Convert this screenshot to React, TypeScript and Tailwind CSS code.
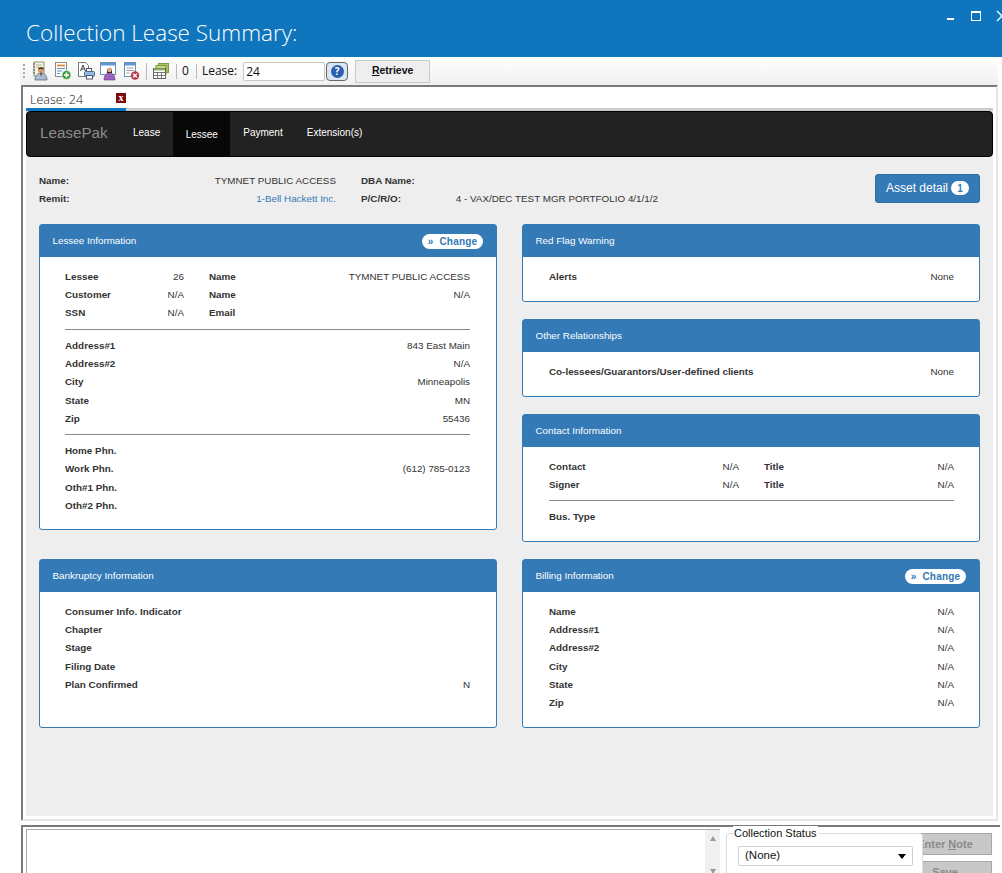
const font = "font-['Liberation_Sans',Arial,sans-serif]";

type Row = { label: string; value?: string };

function Panel({ title, change, className, children }: { title: string; change?: boolean; className: string; children: React.ReactNode }) {
  return (
    <section className={`rounded-[3px] border border-[#337ab7] bg-white ${className}`}>
      <div className="flex h-[32px] items-center justify-between bg-[#337ab7] pl-[12.500px] pr-[13px] text-[9.85px] text-white">
        <span>{title}</span>
        {change ? (
          <span className="mt-[1px] flex h-[15px] w-[61px] items-center justify-center gap-[6px] rounded-full bg-white text-[10px] font-bold tracking-[0.2px] text-[#337ab7]">
            <span>»</span>
            <span>Change</span>
          </span>
        ) : null}
      </div>
      {children}
    </section>
  );
}

function Rows({ rows }: { rows: Row[] }) {
  return (
    <div className="flex flex-col">
      {rows.map((r) => (
        <div key={r.label} className="flex h-[18.3px] items-center justify-between text-[9.85px] text-[#333]">
          <span className="font-bold">{r.label}</span>
          <span>{r.value}</span>
        </div>
      ))}
    </div>
  );
}

function FourCol({ rows, valueW }: { rows: string[][]; valueW: string }) {
  return (
    <div className="flex flex-col">
      {rows.map((r) => (
        <div key={r[0] + r[2]} className="flex h-[18.3px] items-center text-[9.85px] text-[#333]">
          <span className="w-[70px] font-bold">{r[0]}</span>
          <span className={`text-right ${valueW}`}>{r[1]}</span>
          <span className="ml-[25px] font-bold">{r[2]}</span>
          <span className="ml-auto">{r[3]}</span>
        </div>
      ))}
    </div>
  );
}

function ToolbarIcons() {
  return (
    <div className="flex items-center">
      <div className="flex items-center gap-[5px]">
        <svg width="18" height="20" viewBox="0 0 18 20">
          <rect x="3" y="1" width="10" height="14" fill="#f7f5e8" stroke="#8c9470" />
          <path d="M2 3h2M2 6h2M2 9h2M2 12h2" stroke="#555" />
          <path d="M5 4h6M5 6h3" stroke="#b5b08a" />
          <circle cx="10" cy="9" r="3" fill="#d59a6c" />
          <path d="M7 8.500c0-3 6-3 6 0-2-1-4-1-6 0z" fill="#3a2a20" />
          <path d="M4 19c0-5 3-7 6-7s6 2 6 7z" fill="#a9bcd0" stroke="#56606b" strokeWidth=".7" />
          <path d="M9 12h2l-1 4z" fill="#8a3030" />
        </svg>
        <svg width="18" height="20" viewBox="0 0 18 20">
          <rect x="1.500" y="1.500" width="11" height="14" fill="#fff" stroke="#8a8a8a" />
          <path d="M3 4.500h8" stroke="#e8863a" strokeWidth="1.800" />
          <path d="M3 7.500h8M3 10h5M3 12.500h3" stroke="#5b8fd0" />
          <circle cx="12.500" cy="14" r="4.500" fill="#3c9a3c" stroke="#fff" strokeWidth=".6" />
          <path d="M10 14h5M12.500 11.500v5" stroke="#fff" strokeWidth="1.600" />
        </svg>
        <svg width="18" height="20" viewBox="0 0 18 20">
          <path d="M1.500 1.500h7l3 3v11h-10z" fill="#fff" stroke="#777" />
          <path d="M3.500 10l2.500-6 2.500 6M4.500 8h3" fill="none" stroke="#444" />
          <rect x="9.500" y="7.500" width="5" height="3" fill="#fff" stroke="#557" />
          <rect x="7.500" y="10.500" width="10" height="5" rx="1" fill="#8fbde2" stroke="#4d6a88" />
          <rect x="9.500" y="14.500" width="6" height="3.500" fill="#fff" stroke="#557" />
        </svg>
        <svg width="18" height="20" viewBox="0 0 18 20">
          <rect x=".5" y="1.500" width="15" height="12" fill="#fff" stroke="#6a8fb5" />
          <rect x="1" y="2" width="14" height="2.500" fill="#5f9ad6" />
          <path d="M7 12c-1-7 6-7 5 0z" fill="#2e2018" />
          <circle cx="9.500" cy="9" r="2.200" fill="#e4b08c" />
          <path d="M4 19c0-5 2.500-7 5.500-7s5.500 2 5.500 7z" fill="#9b5fc0" stroke="#5a3a70" strokeWidth=".6" />
        </svg>
        <svg width="18" height="20" viewBox="0 0 18 20">
          <rect x="1.500" y="1.500" width="11" height="14" fill="#fff" stroke="#6a8fb5" />
          <rect x="2" y="2" width="10" height="2.500" fill="#5f9ad6" />
          <path d="M3.500 7h7M3.500 9.500h7M3.500 12h3" stroke="#9a9a9a" />
          <circle cx="12" cy="14.500" r="4.200" fill="#b5384a" />
          <path d="M10.200 12.700l3.600 3.600M13.800 12.700l-3.600 3.600" stroke="#fff" strokeWidth="1.500" />
        </svg>
      </div>
      <span className="ml-[5px] h-[17px] w-px bg-[#bbb]" />
      <svg className="ml-[5px]" width="18" height="18" viewBox="0 0 18 18">
        <rect x="6.500" y="1.500" width="10" height="9" fill="#a8c65c" stroke="#7d9a40" />
        <rect x="4" y="3.500" width="10" height="9" fill="#c4d88a" stroke="#7d9a40" />
        <rect x="1.500" y="6.500" width="12" height="10" fill="#fff" stroke="#666" />
        <path d="M2 7.500h11" stroke="#9cb060" strokeWidth="2" />
        <path d="M1.500 10.500h12M1.500 13.500h12M5.500 10v6M9.500 10v6" stroke="#777" />
      </svg>
    </div>
  );
}

export default function App() {
  return (
    <div className={`h-[873px] w-[1002px] overflow-hidden bg-white ${font}`}>
      <header className="relative h-[57px] bg-[#0f75bc]">
        <h1 className="pl-[26px] pt-[18px] font-['Open_Sans',sans-serif] text-[22.500px] font-light leading-[30px] text-white">
          Collection Lease Summary:
        </h1>
        <div className="absolute left-[947px] top-[18px] h-[2px] w-[7px] bg-white" />
        <div className="absolute left-[971px] top-[11px] h-[10px] w-[10px] border border-t-2 border-white" />
        <svg className="absolute left-[996px] top-[10px]" width="12" height="12" viewBox="0 0 12 12">
          <path d="M1 1l10 10M11 1L1 11" stroke="#fff" strokeWidth="1.300" />
        </svg>
      </header>

      <div className="ml-[20px] mr-[4px] flex h-[28px] items-center bg-gradient-to-b from-white to-[#f0f0f0] pl-[3px] font-['Open_Sans',sans-serif] text-[12px] text-[#111]">
        <div className="mr-[6px] h-[14px] w-[2px] border-l-2 border-dotted border-[#aaa]" />
        <ToolbarIcons />
        <span className="ml-[6px] h-[15px] w-px bg-[#bbb]" />
        <span className="ml-[5px]">0</span>
        <span className="ml-[7px] h-[15px] w-px bg-[#bbb]" />
        <span className="ml-[5px]">Lease:</span>
        <input
          readOnly
          value="24"
          className="ml-[6px] h-[19px] w-[82px] rounded-[2px] border border-[#c8c8c8] bg-white pl-[2px] text-[12px] outline-none"
        />
        <span className="ml-[1px] flex h-[19px] w-[22px] items-center justify-center rounded-[4px] border border-[#666] bg-[#dce6f2]">
          <span className="flex h-[13px] w-[13px] items-center justify-center rounded-full bg-[#2a5fb0] text-[10px] font-bold leading-none text-white">?</span>
        </span>
        <button className={`ml-[7px] h-[23px] w-[75px] border border-[#c9c9c9] bg-[#eeeeee] text-[10.500px] font-bold text-[#111] ${font}`}>
          <span className="underline">R</span>etrieve
        </button>
      </div>

      <main className="ml-[21px] mr-[4px] flex h-[736px] flex-col border-2 border-[#7a7a7a] border-r-[#e6e6e6] border-b-[#e6e6e6] pl-[3px] pr-[3px] pb-[3px]">
        <div className="relative h-[24px] shrink-0 font-['Open_Sans',sans-serif]">
          <span className="absolute left-[4px] top-[5px] text-[12.500px] font-light leading-[16px] text-[#111]">Lease: 24</span>
          <span className="absolute left-[90px] top-[6px] flex h-[10px] w-[10px] items-center justify-center bg-[#7d0a0a] font-['Liberation_Serif',serif] text-[10px] font-bold leading-none text-white">x</span>
          <div className="absolute bottom-0 left-0 right-0 h-[3px] bg-[#cccccc]" />
          <div className="absolute bottom-0 left-0 h-[3px] w-[100px] bg-[#0f75bc]" />
        </div>

        <div className="flex min-h-0 flex-1 flex-col bg-[#eeeeee]">
          <nav className="flex h-[46px] shrink-0 items-stretch rounded-[4px] border border-black bg-[#222222] text-[10px] text-white">
            <span className="flex w-[106px] items-center pl-[13px] pb-[1px] text-[15.200px] text-[#8c8c8c]">LeasePak</span>
            <span className="flex items-center pb-[3px]">Lease</span>
            <span className="ml-[13px] flex w-[57px] items-center justify-center bg-[#080808] pt-[1px]">Lessee</span>
            <span className="ml-[13px] flex items-center pb-[3px]">Payment</span>
            <span className="ml-[24px] flex items-center pb-[3px]">Extension(s)</span>
          </nav>

          <div className="flex items-start pl-[13px] pr-[13px] pt-[17px] text-[9.85px] text-[#333]">
            <div className="w-[297px]">
              <div className="flex h-[18px] justify-between">
                <span className="font-bold">Name:</span>
                <span>TYMNET PUBLIC ACCESS</span>
              </div>
              <div className="flex h-[18px] justify-between">
                <span className="font-bold">Remit:</span>
                <span className="text-[#337ab7]">1-Bell Hackett Inc.</span>
              </div>
            </div>
            <div className="ml-[25px] w-[297px]">
              <div className="flex h-[18px]">
                <span className="font-bold">DBA Name:</span>
              </div>
              <div className="flex h-[18px] justify-between">
                <span className="font-bold">P/C/R/O:</span>
                <span>4 - VAX/DEC TEST MGR PORTFOLIO 4/1/1/2</span>
              </div>
            </div>
            <button className="ml-auto flex h-[29px] w-[105px] items-center justify-center gap-[3px] rounded-[3px] border border-[#2e6da4] bg-[#337ab7] pb-[1px] text-[12px] text-white">
              Asset detail
              <span className="flex h-[14px] w-[18px] items-center justify-center rounded-full bg-white text-[10px] font-bold text-[#337ab7]">1</span>
            </button>
          </div>

          <div className="mt-[14px] flex gap-[25px] pl-[13px] pr-[13px]">
            <div className="flex w-[458px] flex-col gap-[29px]">
              <Panel title="Lessee Information" change className="h-[306px]">
                <div className="pl-[25px] pr-[26px] pt-[11px]">
                  <FourCol
                    valueW="w-[49px]"
                    rows={[
                      ['Lessee', '26', 'Name', 'TYMNET PUBLIC ACCESS'],
                      ['Customer', 'N/A', 'Name', 'N/A'],
                      ['SSN', 'N/A', 'Email', ''],
                    ]}
                  />
                  <div className="mb-[7px] mt-[6px] border-t border-[#888]" />
                  <Rows
                    rows={[
                      { label: 'Address#1', value: '843 East Main' },
                      { label: 'Address#2', value: 'N/A' },
                      { label: 'City', value: 'Minneapolis' },
                      { label: 'State', value: 'MN' },
                      { label: 'Zip', value: '55436' },
                    ]}
                  />
                  <div className="mb-[7px] mt-[6px] border-t border-[#888]" />
                  <Rows
                    rows={[
                      { label: 'Home Phn.' },
                      { label: 'Work Phn.', value: '(612) 785-0123' },
                      { label: 'Oth#1 Phn.' },
                      { label: 'Oth#2 Phn.' },
                    ]}
                  />
                </div>
              </Panel>
              <Panel title="Bankruptcy Information" className="h-[169px]">
                <div className="pl-[25px] pr-[26px] pt-[11px]">
                  <Rows
                    rows={[
                      { label: 'Consumer Info. Indicator' },
                      { label: 'Chapter' },
                      { label: 'Stage' },
                      { label: 'Filing Date' },
                      { label: 'Plan Confirmed', value: 'N' },
                    ]}
                  />
                </div>
              </Panel>
            </div>

            <div className="flex w-[458px] flex-col gap-[17px]">
              <Panel title="Red Flag Warning" className="h-[78px]">
                <div className="pl-[26px] pr-[25px] pt-[11px]">
                  <Rows rows={[{ label: 'Alerts', value: 'None' }]} />
                </div>
              </Panel>
              <Panel title="Other Relationships" className="h-[78px]">
                <div className="pl-[26px] pr-[25px] pt-[11px]">
                  <Rows rows={[{ label: 'Co-lessees/Guarantors/User-defined clients', value: 'None' }]} />
                </div>
              </Panel>
              <Panel title="Contact Information" className="h-[128px]">
                <div className="pl-[26px] pr-[25px] pt-[11px]">
                  <FourCol
                    valueW="w-[120px]"
                    rows={[
                      ['Contact', 'N/A', 'Title', 'N/A'],
                      ['Signer', 'N/A', 'Title', 'N/A'],
                    ]}
                  />
                  <div className="mb-[8px] mt-[5px] border-t border-[#888]" />
                  <Rows rows={[{ label: 'Bus. Type' }]} />
                </div>
              </Panel>
              <Panel title="Billing Information" change className="h-[169px]">
                <div className="pl-[26px] pr-[25px] pt-[11px]">
                  <Rows
                    rows={[
                      { label: 'Name', value: 'N/A' },
                      { label: 'Address#1', value: 'N/A' },
                      { label: 'Address#2', value: 'N/A' },
                      { label: 'City', value: 'N/A' },
                      { label: 'State', value: 'N/A' },
                      { label: 'Zip', value: 'N/A' },
                    ]}
                  />
                </div>
              </Panel>
            </div>
          </div>
        </div>
      </main>

      <div className="ml-[21px] mr-[2px] mt-[4px] flex h-[60px] border-l-2 border-t-2 border-[#7a7a7a] pl-[3px] pt-[2px]">
        <div className="flex h-[60px] w-[694px] shrink-0 justify-end border-l border-t border-[#aaa] bg-white">
          <div className="flex w-[15px] flex-col items-center bg-[#f0f0f0] pt-[6px]">
            <span className="h-0 w-0 border-x-[3.500px] border-b-[5px] border-x-transparent border-b-[#999]" />
            <span className="mt-[28px] h-0 w-0 border-x-[3.500px] border-t-[5px] border-x-transparent border-t-[#999]" />
          </div>
        </div>
        <div className="relative z-10 ml-[6px] mt-[4px] h-[60px] w-[197px] shrink-0 rounded-[3px] border border-[#dcdcdc] bg-white">
          <span className="absolute -top-[8px] left-[6px] bg-white px-px text-[11px] leading-[15px] text-[#111]">Collection Status</span>
          <div className="ml-[11px] mt-[12px] flex h-[20px] w-[175px] items-center justify-between rounded-[2px] border border-[#d0d0d0] pl-[6px] pr-[4px] text-[11.500px] text-[#111]">
            <span>(None)</span>
            <span className="mr-[2px] h-0 w-0 border-x-[4px] border-t-[5px] border-x-transparent border-t-black" />
          </div>
        </div>
        <div className="-ml-[25px] mt-[4px] flex w-[94px] shrink-0 flex-col gap-[6px] text-[11px] font-bold text-[#8a8a8a]">
          <button className="h-[22px] border border-[#a8a8a8] bg-[#c8c8c8]">
            Enter <span className="underline">N</span>ote
          </button>
          <button className="h-[23px] border border-[#a8a8a8] bg-[#c8c8c8]">Save</button>
        </div>
      </div>
    </div>
  );
}
